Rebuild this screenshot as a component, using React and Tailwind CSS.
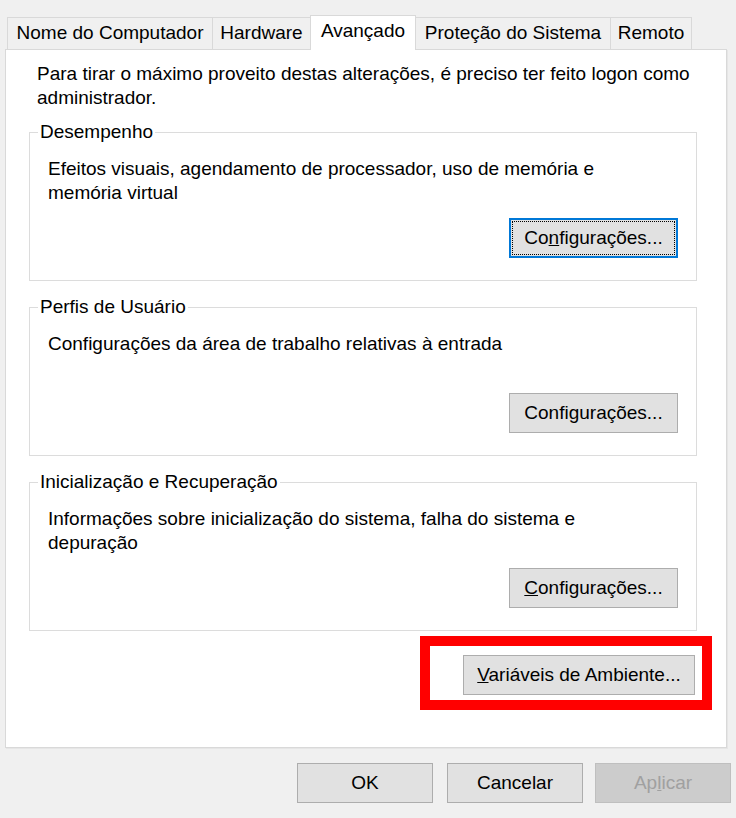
const tabs = [
  { label: 'Nome do Computador', w: 'w-[206px]' },
  { label: 'Hardware', w: 'w-[99px]' },
  { label: 'Avançado', w: 'w-[106px]', active: true },
  { label: 'Proteção do Sistema', w: 'w-[196px]' },
  { label: 'Remoto', w: 'w-[82px]' },
]

function Tab({ label, w, active }) {
  if (active) {
    return (
      <div className={`${w} -ml-px relative z-10 -mb-px h-[35px] bg-white border border-b-0 border-[#d9d9d9] flex items-center justify-center pb-[3px]`}>
        {label}
      </div>
    )
  }
  return (
    <div className={`${w} -ml-px first:ml-0 h-[32px] bg-[#f0f0f0] border border-b-0 border-[#d9d9d9] flex items-center justify-center`}>
      {label}
    </div>
  )
}

function Btn({ children, focused, disabled, className = '' }) {
  let look = 'bg-[#e1e1e1] border border-[#adadad] text-black'
  if (focused) look = 'bg-[#e1e1e1] border-2 border-[#0078d7] text-black outline-1 outline-dotted outline-black outline-offset-[-4px]'
  if (disabled) look = 'bg-[#cccccc] border border-[#bfbfbf] text-[#a0a0a0]'
  return (
    <div className={`${look} h-[40px] flex items-center justify-center ${className}`}>
      {children}
    </div>
  )
}

function Group({ title, lines, button }) {
  return (
    <fieldset className="border border-[#dcdcdc] ml-[23px] mr-[29px]">
      <legend className="ml-[8px] px-[2px] leading-[24px]">{title}</legend>
      <div className="pl-[18px] pr-[18px] pt-[13px] pb-[22px]">
        <div className="min-h-[48px] leading-[24px]">
          {lines.map((l) => (
            <div key={l}>{l}</div>
          ))}
        </div>
        <div className="flex justify-end mt-[13px]">
          <Btn focused={button.focused} className="w-[169px]">
            {button.label}
          </Btn>
        </div>
      </div>
    </fieldset>
  )
}

export default function App() {
  return (
    <div className="w-[736px] h-[818px] bg-[#f0f0f0] text-[19px] text-black overflow-hidden" style={{ fontFamily: '"Liberation Sans", Arial, sans-serif' }}>
      <div className="flex items-end pl-[7px] pt-[15px]">
        {tabs.map((t) => (
          <Tab key={t.label} {...t} />
        ))}
      </div>

      <div className="ml-[5px] w-[722px] h-[699px] bg-white border border-[#d9d9d9] shadow-[1px_1px_0_#e6e6e6]">
        <div className="pl-[31px] pt-[12px] leading-[24px]">
          <div>Para tirar o máximo proveito destas alterações, é preciso ter feito logon como</div>
          <div>administrador.</div>
        </div>

        <div className="mt-[10px] flex flex-col gap-[14px]">
          <Group
            title="Desempenho"
            lines={['Efeitos visuais, agendamento de processador, uso de memória e', 'memória virtual']}
            button={{ focused: true, label: <span>Co<span className="underline">n</span>figurações...</span> }}
          />
          <Group
            title="Perfis de Usuário"
            lines={['Configurações da área de trabalho relativas à entrada']}
            button={{ label: <span>Confi<span className="underline">g</span>urações...</span> }}
          />
          <Group
            title="Inicialização e Recuperação"
            lines={['Informações sobre inicialização do sistema, falha do sistema e', 'depuração']}
            button={{ label: <span><span className="underline">C</span>onfigurações...</span> }}
          />
        </div>

        <div className="flex justify-end mr-[14px] mt-[5px]">
          <div className="border-[10px] border-[#ff0000] pl-[33px] pr-[7px] pt-[9px] pb-[5px]">
            <Btn className="w-[232px] h-[39px]">
              <span><span className="underline">V</span>ariáveis de Ambiente...</span>
            </Btn>
          </div>
        </div>
      </div>

      <div className="flex justify-end pr-[5px] mt-[15px]">
        <Btn className="w-[136px]">OK</Btn>
        <Btn className="w-[136px] ml-[14px]">Cancelar</Btn>
        <Btn disabled className="w-[136px] ml-[12px]">
          <span>Ap<span className="underline">l</span>icar</span>
        </Btn>
      </div>
    </div>
  )
}
